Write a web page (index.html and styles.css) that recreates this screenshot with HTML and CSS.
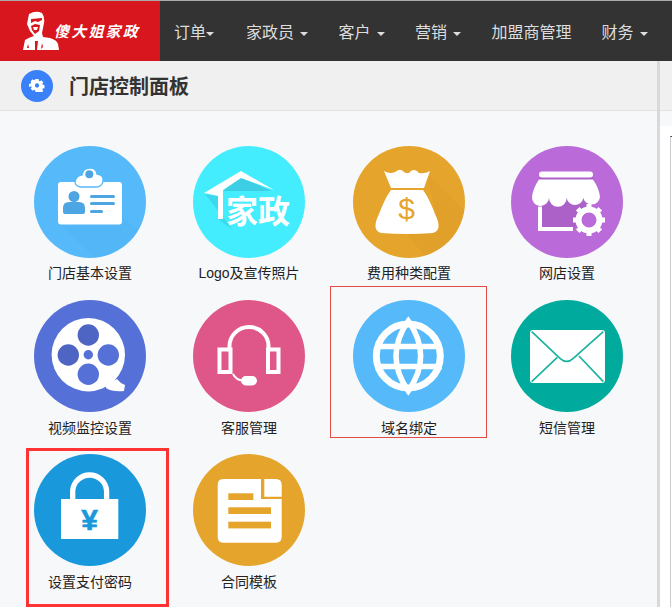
FILE: index.html
```html
<!DOCTYPE html>
<html lang="en">
<head>
    <meta charset="UTF-8">
    <meta name="viewport" content="width=device-width, initial-scale=1.0">
    <title>门店控制面板</title>
    <link rel="stylesheet" href="styles.css">
</head>
<body>
    <nav class="navbar">
        <a class="brand">
            <svg class="brand-face" viewBox="0 0 38 40" width="38" height="40">
                <path fill="#fff" d="M1 39 L3 29 Q8 26 12 25 L8 20 L5 13 L7 3 Q14 -1 20 2 Q23 6 22 12 L20 22 L21 26 L28 27 Q35 29 36 33 L37 39 Z"/>
                <path fill="#d7161d" d="M9 8 L20 7 L20 9 L16 11 L13 10 L9 12 Z M9 15 L13 13 L18 14 L17 20 L13 23 L10 19 Z M13 30 L16 30 L15 39 L13 39 Z M20 32 L21 36 L19 38 Z M6 33 L7 37 L5 37 Z"/>
                <path fill="#fff" d="M11 16 L16 16 L15 19 L12 19 Z"/>
            </svg>
            <span class="brand-name">傻大姐家政</span>
        </a>
        <ul class="nav-list">
            <li class="nav-first">订单<i class="caret"></i></li>
            <li>家政员 <i class="caret"></i></li>
            <li>客户 <i class="caret"></i></li>
            <li>营销 <i class="caret"></i></li>
            <li>加盟商管理</li>
            <li>财务 <i class="caret"></i></li>
        </ul>
    </nav>

    <div class="page">
        <div class="page-main">
            <header class="title-bar">
                <span class="title-icon">
                    <svg viewBox="-3 0 30 24" width="16" height="13"><path fill="#fff" fill-rule="evenodd" d="M9 0h6l.6 3.200 1.800.8 2.700-1.800 3.700 3.700-1.800 2.700.8 1.800 3.200.6v6l-3.200.6-.8 1.800 1.800 2.700-3.700 3.700-2.700-1.800-1.800.8L15 24H9l-.6-3.200-1.800-.8-2.700 1.800-3.700-3.700 1.800-2.700-.8-1.800L-3 15V9l3.200-.6.8-1.800L.2 3.900 3.900.2l2.700 1.800 1.800-.8z M12 8a4 4 0 1 0 0 8a4 4 0 0 0 0-8z"/></svg>
                </span>
                <h1>门店控制面板</h1>
            </header>

            <main class="panel">
                <div class="grid">
                    <a class="cell">
                        <span class="circle c-sky">
                            <svg viewBox="0 0 112 112" width="112" height="112">
                                <path fill="#4da5e2" opacity=".15" d="M24 76 L60 111 A56 56 0 0 0 104 84 L88 70 Z"/>
                                <rect x="24" y="36" width="64" height="42.500" rx="3" fill="#fff"/>
                                <path fill="#fff" stroke="#55b9fa" stroke-width="1.300" d="M46 41 Q39 39 42 33 Q44 29 48 29 Q49 22 56 22 Q62 22 63 28 Q70 29 69 35 Q68 41 62 41 Z"/>
                                <circle cx="55.300" cy="28.300" r="4" fill="#4da5e2"/>
                                <circle cx="40" cy="50.500" r="5.500" fill="#4da5e2"/>
                                <path fill="#4da5e2" d="M29 66 V62 Q29 56 35 56 H45 Q51 56 51 62 V66 Q51 68 49 68 H31 Q29 68 29 66Z"/>
                                <rect x="56" y="49" width="25" height="3" rx="1.500" fill="#4da5e2"/>
                                <rect x="56" y="56" width="25" height="3" rx="1.500" fill="#4da5e2"/>
                                <rect x="56" y="64" width="13" height="3" rx="1.500" fill="#4da5e2"/>
                            </svg>
                        </span>
                        <span class="label">门店基本设置</span>
                    </a>
                    <a class="cell">
                        <span class="circle c-cyan">
                            <svg viewBox="0 0 112 112" width="112" height="112">
                                <path fill="#38b9d4" opacity=".6" d="M48 31 L78 45 L30 45 Z"/>
                                <path fill="#38b9d4" opacity=".4" d="M12 48 L25 50 V73 L40 84 Z"/>
                                <path fill="#fff" d="M11 47 L48 25 L81 44 L48 32 L30 44 V73 H25 V50 Z"/>
                                <text class="icon-word" x="33" y="77">家政</text>
                            </svg>
                        </span>
                        <span class="label">Logo及宣传照片</span>
                    </a>
                    <a class="cell">
                        <span class="circle c-amber">
                            <svg viewBox="0 0 112 112" width="112" height="112">
                                <path fill="#c98f25" opacity=".15" d="M74 28 L111 64 A56 56 0 0 1 72 110 L54 88 L86 80 Z"/>
                                <path fill="#fff" d="M31 25 Q38 29 44 25 Q47 22 51 26 Q55 29 58 25 Q62 22 66 27 Q72 28 77 25 L71 42 H38 Z"/>
                                <path fill="#fff" d="M38 44 H70 Q76 52 82 68 Q90 84 80 87 Q54 89 28 87 Q18 84 26 68 Q32 52 38 44Z"/>
                                <text class="icon-dollar" x="53.700" y="73">$</text>
                            </svg>
                        </span>
                        <span class="label">费用种类配置</span>
                    </a>
                    <a class="cell">
                        <span class="circle c-purple">
                            <svg viewBox="0 0 112 112" width="112" height="112">
                                <path fill="#a55cc0" opacity=".7" d="M28 31 H82 L89 50 L62 84 H31 V58 Z"/>
                                <rect x="28" y="25.500" width="54" height="6" rx="3" fill="#fff"/>
                                <path fill="#fff" d="M28 33.500 H82 Q88 42 89 51 A8.500 8.500 0 0 1 72.300 52 A8.400 8.400 0 0 1 55.700 52 A8.800 8.800 0 0 1 38 52 A8.500 8.500 0 0 1 21 51 Q22 42 28 33.500Z"/>
                                <path fill="none" stroke="#fff" stroke-width="4" d="M29 60.500 V83 H62"/>
                                <circle cx="78" cy="74" r="10.500" fill="none" stroke="#fff" stroke-width="6"/>
                                <path fill="none" stroke="#fff" stroke-width="5" d="M78 58 v5 M78 85 v5 M62 74 h5 M89 74 h5 M66.700 62.700 l3.500 3.500 M85.800 81.800 l3.500 3.500 M66.700 85.300 l3.500 -3.500 M85.800 66.200 l3.500 -3.500"/>
                            </svg>
                        </span>
                        <span class="label">网店设置</span>
                    </a>

                    <a class="cell">
                        <span class="circle c-indigo">
                            <svg viewBox="0 0 112 112" width="112" height="112">
                                <circle cx="54.300" cy="54.700" r="36.700" fill="#fff"/>
                                <path fill="#fff" d="M72 85 L83 79 Q86 83 91 85 L90 91 Q78 92 72 88Z"/>
                                <circle cx="54.300" cy="35" r="10.700" fill="#4f65c4"/>
                                <circle cx="34.300" cy="55" r="10.700" fill="#4f65c4"/>
                                <circle cx="74.300" cy="55" r="10.700" fill="#5570d6"/>
                                <circle cx="54.300" cy="74.300" r="10.700" fill="#5570d6"/>
                                <circle cx="54.300" cy="54.700" r="4.700" fill="#5570d6"/>
                            </svg>
                        </span>
                        <span class="label">视频监控设置</span>
                    </a>
                    <a class="cell">
                        <span class="circle c-rose">
                            <svg viewBox="0 0 112 112" width="112" height="112">
                                <g fill="none" stroke="#fff" stroke-width="4">
                                    <path d="M36.500 49 V46 A19.500 19 0 0 1 75.500 46 V49"/>
                                    <rect x="26.500" y="49.500" width="11" height="22.500"/>
                                    <rect x="75" y="49.500" width="10.500" height="22.500"/>
                                    <path d="M40 74 Q43 80 50 80.500" stroke-width="2"/>
                                </g>
                                <rect x="48" y="76" width="16" height="9.500" rx="4.700" fill="#fff"/>
                            </svg>
                        </span>
                        <span class="label">客服管理</span>
                    </a>
                    <a class="cell cell-marked">
                        <span class="circle c-sky">
                            <svg viewBox="0 0 112 112" width="112" height="112">
                                <g fill="none" stroke="#fff">
                                    <circle cx="55.300" cy="56" r="32" stroke-width="7"/>
                                    <path d="M55.300 21 Q30.700 56 55.300 91 Q80 56 55.300 21Z" stroke-width="5.500"/>
                                    <path d="M22 46.500 H89 M22 66.500 H89" stroke-width="5.500"/>
                                </g>
                            </svg>
                        </span>
                        <span class="label">域名绑定</span>
                    </a>
                    <a class="cell">
                        <span class="circle c-teal">
                            <svg viewBox="0 0 112 112" width="112" height="112">
                                <rect x="19" y="30" width="75" height="53" rx="3" fill="#fff"/>
                                <g fill="none" stroke="#1cb3a2" stroke-width="1.700">
                                    <path d="M20.700 31.700 L49 58.300 Q55.700 64.500 62.300 58.300 L92.300 31.700"/>
                                    <path d="M20.700 81.700 L46.300 57.300 M92.300 81.700 L68 56"/>
                                </g>
                            </svg>
                        </span>
                        <span class="label">短信管理</span>
                    </a>

                    <a class="cell cell-flagged">
                        <span class="circle c-blue">
                            <svg viewBox="0 0 112 112" width="112" height="112">
                                <path fill="none" stroke="#fff" stroke-width="5.300" d="M38.700 46 V36.700 A17 17 0 0 1 72.600 36.700 V46"/>
                                <rect x="27" y="45" width="57.300" height="40" fill="#fff"/>
                                <text class="icon-yen" x="55.700" y="76">¥</text>
                            </svg>
                        </span>
                        <span class="label">设置支付密码</span>
                    </a>
                    <a class="cell">
                        <span class="circle c-amber">
                            <svg viewBox="0 0 112 112" width="112" height="112">
                                <path fill="#fff" d="M30 25 H68 V45 H88.700 V83 Q88.700 88.700 83 88.700 H30 Q24.700 88.700 24.700 83 V31 Q24.700 25 30 25Z"/>
                                <path fill="#fff" d="M71.300 25 H83 Q88.700 25 88.700 31 V42.700 H71.300 Z"/>
                                <rect x="35.300" y="39.300" width="25" height="6.700" fill="#e5a42b"/>
                                <rect x="35.300" y="53.300" width="42.700" height="6.700" fill="#e5a42b"/>
                                <rect x="35.300" y="67.700" width="42.700" height="6.700" fill="#e5a42b"/>
                            </svg>
                        </span>
                        <span class="label">合同模板</span>
                    </a>
                </div>
            </main>
        </div>

        <aside class="page-side">
            <div class="side-head"></div>
            <div class="side-gap"></div>
            <div class="side-body">
                <div class="side-box"></div>
            </div>
        </aside>
    </div>
</body>
</html>
```
FILE: styles.css
```css
html, body {
    margin: 0;
    padding: 0;
    height: 607px;
    overflow: hidden;
}
body {
    font-family: "Liberation Sans", "Noto Sans CJK SC", sans-serif;
    background-color: #f7f8fa;
    color: #222;
}
.navbar {
    display: flex;
    height: 60px;
    background-color: #333;
    border-top: 1px solid #aaa;
}
.brand {
    display: flex;
    align-items: flex-end;
    width: 160px;
    padding: 0 0 10px 22px;
    box-sizing: border-box;
    background-color: #d7161d;
    color: #fff;
}
.brand-face {
    flex-shrink: 0;
    filter: blur(.4px);
}
.brand-name {
    margin: 0 0 10px -6px;
    font-family: "Noto Sans CJK SC", sans-serif;
    font-size: 15px;
    font-weight: 700;
    font-style: italic;
    letter-spacing: 2.200px;
    white-space: nowrap;
}
.nav-list {
    display: flex;
    align-items: center;
    gap: 30px;
    list-style: none;
    margin: 0;
    padding: 0 0 0 14px;
    font-size: 16px;
    color: #ddd;
    white-space: nowrap;
}
.nav-first {
    margin-right: 2px;
}
.caret {
    display: inline-block;
    width: 0;
    height: 0;
    margin-left: 2px;
    vertical-align: middle;
    border-top: 4px solid #ddd;
    border-left: 4px solid transparent;
    border-right: 4px solid transparent;
}
.nav-first .caret {
    margin-left: 0;
}
.page {
    display: flex;
    height: 546px;
}
.page-main {
    width: 657px;
    flex-shrink: 0;
    border-right: 3px solid #d9d9dc;
}
.page-side {
    flex: 1;
    display: flex;
    flex-direction: column;
}
.title-bar {
    display: flex;
    align-items: center;
    height: 49px;
    padding-left: 21px;
    background-color: #f0f0f0;
    border-bottom: 1px solid #e2e2e2;
}
.title-icon {
    display: flex;
    align-items: center;
    justify-content: center;
    width: 32px;
    height: 32px;
    border-radius: 50%;
    background-color: #3a80f8;
}
.title-bar h1 {
    margin: 0 0 0 16px;
    font-size: 20px;
    font-weight: 700;
    color: #333;
}
.side-head {
    height: 49px;
    background-color: #f0f0f0;
    border-bottom: 1px solid #e2e2e2;
}
.side-gap {
    height: 15px;
}
.side-body {
    flex: 1;
    padding: 10px 0 0 10px;
    background-color: #fff;
}
.side-box {
    height: 100%;
    box-sizing: border-box;
    border-top: 1px solid #33337a;
    border-left: 1px solid #ccc;
}
.panel {
    padding: 35px 0 0 11px;
}
.grid {
    display: grid;
    grid-template-columns: 158px 160px 160px 156px;
    grid-auto-rows: 154px;
}
.cell {
    position: relative;
    display: flex;
    flex-direction: column;
    align-items: center;
}
.cell-marked::after {
    content: "";
    position: absolute;
    top: -14px;
    bottom: 16px;
    left: 1px;
    right: 2px;
    border: 1px solid #e04b45;
}
.cell-flagged::after {
    content: "";
    position: absolute;
    top: -6px;
    bottom: 1px;
    left: 15px;
    right: 0;
    border: 3px solid #ff3333;
}
.circle {
    display: block;
    width: 112px;
    height: 112px;
    border-radius: 50%;
    overflow: hidden;
}
.circle svg {
    display: block;
}
.c-sky { background-color: #55b9fa; }
.c-cyan { background-color: #43edfd; }
.c-amber { background-color: #e5a42b; }
.c-purple { background-color: #bb6bd9; }
.c-indigo { background-color: #5570d6; }
.c-rose { background-color: #df5788; }
.c-teal { background-color: #00ab9e; }
.c-blue { background-color: #1a98dc; }
.label {
    margin-top: 6px;
    font-size: 14px;
    line-height: 20px;
    color: #222;
}
.cell:nth-child(-n+4) .label {
    margin-top: 5px;
}
.icon-word {
    font-family: "Noto Sans CJK SC", sans-serif;
    font-size: 32px;
    font-weight: 700;
    fill: #fff;
}
.icon-dollar {
    font-family: "Liberation Sans", sans-serif;
    font-size: 30px;
    fill: #e5a42b;
    text-anchor: middle;
}
.icon-yen {
    font-family: "Liberation Sans", sans-serif;
    font-size: 30px;
    font-weight: 700;
    fill: #1a98dc;
    stroke: #1a98dc;
    stroke-width: .6;
    text-anchor: middle;
}
```
